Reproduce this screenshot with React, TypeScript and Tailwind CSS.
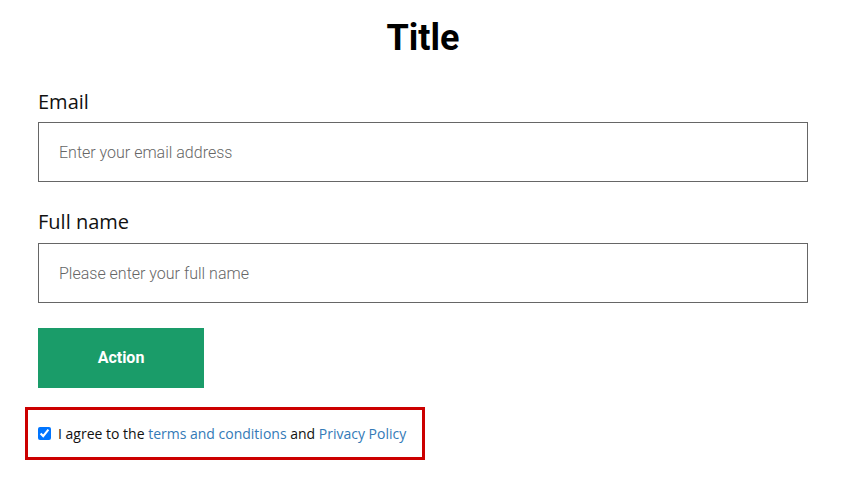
export default function App() {
  return (
    <div className="min-h-[480px] bg-white px-[38px] pt-[18px]">
      <div className="w-[770px]">
        <h1 className="text-center text-[36px] leading-[40px] font-bold text-black font-['Roboto',sans-serif]">
          Title
        </h1>

        <form className="mt-[29px] flex flex-col" onSubmit={(e) => e.preventDefault()}>
          <label className="text-[20px] leading-[30px] text-[#111] font-['Open_Sans',sans-serif]">
            Email
          </label>
          <input
            type="email"
            placeholder="Enter your email address"
            className="mt-[5px] h-[60px] w-full border border-[#666] px-5 text-[16px] font-light font-['Roboto',sans-serif] text-[#222] placeholder:text-[#666] outline-none"
          />

          <label className="mt-[25px] text-[20px] leading-[30px] text-[#111] font-['Open_Sans',sans-serif]">
            Full name
          </label>
          <input
            type="text"
            placeholder="Please enter your full name"
            className="mt-[6px] h-[60px] w-full border border-[#666] px-5 text-[16px] font-light font-['Roboto',sans-serif] text-[#222] placeholder:text-[#666] outline-none"
          />

          <button
            type="submit"
            className="mt-[25px] h-[60px] w-[166px] bg-[#1a9c69] text-[16px] font-bold text-white font-['Roboto',sans-serif]"
          >
            Action
          </button>
        </form>

        <div className="-ml-[13px] mt-[19px] flex h-[53px] w-[400px] items-center border-[3px] border-[#c00] pl-[10px] font-['Open_Sans',sans-serif] text-[14px] text-[#111]">
          <input type="checkbox" defaultChecked className="m-0 h-[13px] w-[13px]" />
          <span className="ml-[7px]">
            I agree to the <a href="#" className="text-[#337ab7]">terms and conditions</a> and{" "}
            <a href="#" className="text-[#337ab7]">Privacy Policy</a>
          </span>
        </div>
      </div>
    </div>
  );
}
